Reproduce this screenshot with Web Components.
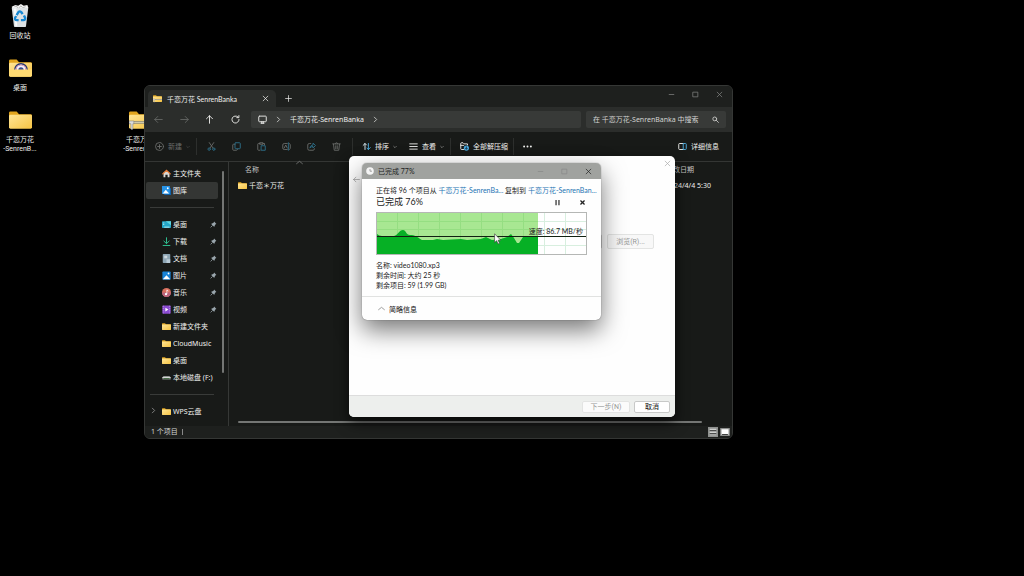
<!DOCTYPE html>
<html lang="zh-CN">
<head>
<meta charset="utf-8">
<title>桌面</title>
<style>
html,body{margin:0;height:100%;background:#000;overflow:hidden}
body{font:7px/10px "Noto Sans","Noto Sans CJK SC",sans-serif;color:#f0f0ee}
</style>
</head>
<body>
<desk-top></desk-top>
<script>
const folder = '<path d="M0 2.5Q0 1 1.500 1H8L10.500 4H22.500Q24 4 24 5.500V18H0Z" fill="#e2a51d"/><path d="M0 5.500Q0 4.500 1.500 4.500H22.500Q24 4.500 24 6V17.500Q24 19 22.500 19H1.500Q0 19 0 17.500Z" fill="url(#f)"/><defs><linearGradient id="f" x2="1" y2="1"><stop stop-color="#ffe596"/><stop offset="1" stop-color="#f6c444"/></linearGradient></defs>';
const line = (d, extra = '') => `<path d="${d}" fill="none" stroke="currentColor" stroke-width="1.2" stroke-linecap="round" stroke-linejoin="round" ${extra}/>`;
const tone = (d, c) => `<path d="${d}" fill="none" stroke="${c}" stroke-width="1.3" stroke-linecap="round" stroke-linejoin="round"/>`;
const ICONS = {
  folder: ['0 0 24 20', folder],
  zip: ['0 0 24 20', folder + '<path d="M0 11H24V14H0Z" fill="#9c9578"/><path d="M0 12.500H24" stroke="#d6d0b5"/><path d="M0 11h5v3h-1v5q0 1-1 1t-1-1v-5h-2z" fill="#dcdcdc" stroke="#777" stroke-width=".5"/>'],
  rainbow: ['0 0 24 20', folder + '<g fill="none" stroke-width="1.500"><path d="M6 12a6.500 6.500 0 0 1 13 0" stroke="#28366d" fill="#fff"/><path d="M7.500 12a5 5 0 0 1 10 0" stroke="#d89bb2"/><path d="M9 12a3.500 3.500 0 0 1 7 0" stroke="#f3f3ff" fill="#394c8c"/></g><path d="M0 11.500H24V17.500Q24 19 22.500 19H1.500Q0 19 0 17.500Z" fill="#ffda72"/>'],
  bin: ['0 0 20 26', '<path d="M1 3L5 1 8 2 11 0 14 2 18 1 19 4 17 7H3Z" fill="#f5f5f5"/><path d="M4 3l2-1 2 3 3-3 2 2 3-1" stroke="#aaa" fill="none"/><path d="M1 4H19L16.500 24Q16.300 25 15 25H5Q3.700 25 3.500 24Z" fill="#dce1e4"/><path d="M3 5h3l1 19H5Z" fill="#f7f9fa"/><g fill="none" stroke="#1687d2" stroke-width="2.600"><path d="M6.300 12L8.300 8.800Q10 7 11.500 9L12.800 11"/><path d="M14.300 12.500L15.500 14.800Q16 17.300 13.500 17.500H11"/><path d="M8.500 17.500H6.500Q4 17 4.800 14.800L5.800 13"/></g>'],
  back: ['0 0 12 12', line('M11 6H1M5 2L1 6L5 10')],
  forward: ['0 0 12 12', line('M1 6H11M7 2L11 6L7 10')],
  up: ['0 0 12 12', line('M6 11V1M2 5L6 1L10 5')],
  reload: ['0 0 12 12', line('M10.700 6A4.700 4.700 0 1 1 9 2.400M10.500 .8V3.500H7.700')],
  pc: ['0 0 12 12', line('M2 1.500H10Q11 1.500 11 2.500V8Q11 9 10 9H2Q1 9 1 8V2.500Q1 1.500 2 1.500M4 11H8M5 9V11M7 9V11')],
  right: ['0 0 12 12', line('M4 2L8 6L4 10')],
  down: ['0 0 12 12', line('M2 4L6 8L10 4')],
  caret: ['0 0 12 12', line('M1 8L6 4L11 8')],
  close: ['0 0 12 12', line('M2 2L10 10M10 2L2 10')],
  stop: ['0 0 12 12', '<path d="M2.500 2.500L9.500 9.500M9.500 2.500L2.500 9.500" stroke="currentColor" stroke-width="2.200"/>'],
  pause: ['0 0 12 12', '<path d="M3.500 1.500V10.500M8.500 1.500V10.500" stroke="currentColor" stroke-width="2"/>'],
  plus: ['0 0 12 12', line('M6 1V11M1 6H11')],
  min: ['0 0 12 12', line('M2 6H10')],
  max: ['0 0 12 12', line('M2 2H10V10H2Z')],
  search: ['0 0 12 12', line('M8 5A3.300 3.300 0 1 1 1.400 5A3.300 3.300 0 0 1 8 5M7.500 7.500L11 11')],
  add: ['0 0 12 12', line('M11.300 6A5.300 5.300 0 1 1 .7 6A5.300 5.300 0 0 1 11.300 6M6 3.500V8.500M3.500 6H8.500')],
  cut: ['0 0 12 12', line('M3 .8L8 8M9 .8L4 8') + tone('M4.500 9.500A1.600 1.600 0 1 1 1.300 9.500A1.600 1.600 0 0 1 4.500 9.500M10.700 9.500A1.600 1.600 0 1 1 7.500 9.500A1.600 1.600 0 0 1 10.700 9.500', '#2c6b84')],
  copy: ['0 0 12 12', line('M4 3H2Q1 3 1 4V10Q1 11 2 11H6Q7 11 7.500 9.500') + tone('M5 1H10Q11 1 11 2V8Q11 9 10 9H5Q4 9 4 8V2Q4 1 5 1', '#2c6b84')],
  paste: ['0 0 12 12', line('M4 2H2Q1 2 1 3V10Q1 11 2 11H4M8 2H10V4M4 1H8V3H4Z') + tone('M6 5H11V11H6Z', '#2c6b84')],
  rename: ['0 0 12 12', line('M7 2H3Q1 2 1 4V8Q1 10 3 10H7M10 2Q11 3 11 4V8Q11 9 10 10M3 8L5 4L7 8') + tone('M8.500 1V11', '#2c6b84')],
  share: ['0 0 12 12', line('M5 2H3Q1 2 1 4V9Q1 11 3 11H8Q10 11 10 9') + tone('M4 7.500Q5 4 8 4V1.500L11.300 4.700L8 8V6Q5.500 6 4 7.500', '#2c6b84')],
  trash: ['0 0 12 12', line('M1 2.500H11M4.500 2.500Q4.500 1 6 1T7.500 2.500M2 3L3 11H9L10 3M5 5V9M7 5V9')],
  sort: ['0 0 12 12', tone('M4 10V2M1.500 4.500L4 2L6 4', '#d5e5ec') + tone('M8.500 2V10M6.500 8L8.500 10L11 7.500', '#4aa8d8')],
  view: ['0 0 12 12', line('M1 2.500H11M1 6H11M1 9.500H11')],
  extract: ['0 0 12 12', line('M5 10H2Q1 10 1 9V2Q1 1 2 1H4L5.500 2.500H10V4M1 4.500H5') + '<circle cx="8.500" cy="8" r="3.500" fill="#49a9dc"/><path d="M8.500 6V9.500M7 8.300L8.500 9.800L10 8.300" stroke="#123" fill="none"/>'],
  dots: ['0 0 12 12', '<g fill="currentColor"><circle cx="1.500" cy="6" r="1.300"/><circle cx="6" cy="6" r="1.300"/><circle cx="10.500" cy="6" r="1.300"/></g>'],
  panel: ['0 0 12 12', line('M7 2H2Q1 2 1 3V9Q1 10 2 10H7') + tone('M7.500 2H10Q11 2 11 3V9Q11 10 10 10H7.500Z', '#4aa8d8')],
  home: ['0 0 12 12', '<path d="M2 5L6 2L10 5V11H7.500V7.500H4.500V11H2Z" fill="#d9d9d6"/><path d="M1 6.500L6 1.700L11 6.500" fill="none" stroke="#e57d3b" stroke-width="1.700" stroke-linecap="round"/>'],
  gallery: ['0 0 12 12', '<path d="M3 3H12V12H3Z" fill="#0d62ac"/><path d="M0 0H10.500V10.500H0Z" fill="#2793e6"/><path d="M1 10L5 5L9.500 10Z" fill="#fff"/><circle cx="7.700" cy="3" r="1.200" fill="#fff"/>'],
  desktop: ['0 0 12 12', '<rect y="1.500" width="12" height="9" rx="1" fill="#24a7c8"/><path d="M5 1.500H12V7Z" fill="#5fd5e0"/><path d="M1.500 4H3M1.500 6H3M3 9.500H10" stroke="#d8ffff"/>'],
  download: ['0 0 12 12', tone('M6 1V8.500M2.500 5.500L6 8.800L9.500 5.500M1.500 11.300H10.500', '#2fc191')],
  doc: ['0 0 12 12', '<rect x="1" width="10" height="12" rx="1" fill="#8ea6b5"/><path d="M3 3H7M3 5H7" stroke="#fff"/><path d="M6 7H11V12H6Z" fill="#b8cad5"/>'],
  picture: ['0 0 12 12', '<rect x=".5" y=".5" width="11" height="11" rx="1" fill="#1783d7"/><path d="M1 11L6 5.500L11 11Z" fill="#fff"/><circle cx="8.700" cy="3.300" r="1.200" fill="#fff"/>'],
  music: ['0 0 12 12', '<circle cx="6" cy="6" r="6" fill="#d8705e"/><path d="M0 6A6 6 0 0 0 12 6Z" fill="#b9637c"/><path d="M6.500 8V2.500L8.500 4" stroke="#fff" fill="none"/><circle cx="5.300" cy="8.300" r="1.500" fill="#fff"/>'],
  video: ['0 0 12 12', '<rect x=".5" y=".5" width="11" height="11" rx="1" fill="#8a4bd0"/><path d="M4.500 3.500L8.500 6L4.500 8.500Z" fill="#fff"/><path d="M1.700 1V11M10.300 1V11" stroke="#c9a0f5" stroke-dasharray="1.500 1.500"/>'],
  disk: ['0 0 12 12', '<path d="M2 4H10L11.500 6V8.500H.5V6Z" fill="#8d918f"/><path d="M.5 6H11.500" stroke="#eee"/><path d="M2 7.500H10" stroke="#252"/>'],
  pin: ['0 0 12 12', '<path d="M7 1L11 5L9.500 5.500L8 8Q8 9.500 7 10L2 5Q3 4 4.500 4L6.500 2.500Z" fill="#9aa6ad"/><path d="M4.500 7.500L1 11" stroke="#9aa6ad" stroke-width="1.300"/>'],
  clock: ['0 0 12 12', '<circle cx="6" cy="6" r="5.700" fill="#f4f4f4"/><path d="M6 3V6.300H9" fill="none" stroke="#888" stroke-width="1.100"/>'],
  list: ['0 0 12 12', '<path d="M0 0H12V12H0Z" fill="#8f918f"/><path d="M2 2H10V10H2Z" fill="#cfd1cf"/><path d="M2 4.500H10M2 8H10" stroke="#222" stroke-width="1.300"/>'],
  tiles: ['0 0 12 12', '<path d="M1 2H11V10H1Z" fill="#fff" stroke="#8c8e8c" stroke-width="1.500"/><path d="M2.500 9H9.500" stroke="#222"/>'],
  cursor: ['0 0 12 20', '<path d="M1 1V16L4.500 12.800L7 18.500L9.500 17.300L7 12H11.500Z" fill="#fff" stroke="#333"/>']
};
const BASE = `*{box-sizing:border-box}:host{box-sizing:border-box;display:block}
button,input{font:inherit;color:inherit;background:none;border:0;padding:0;margin:0;outline:0}
button{display:flex;align-items:center;justify-content:center;gap:4px;white-space:nowrap}
a{color:inherit;text-decoration:none}`;
function define(name, css, html) {
  customElements.define(name, class extends HTMLElement {
    constructor() {
      super();
      const t = document.createElement('template');
      t.innerHTML = `<style>${BASE}${css}</style>${typeof html === 'function' ? html(this) : html}`;
      this.attachShadow({ mode: 'open' }).append(t.content.cloneNode(true));
    }
  });
}
const icon = (n, s = 9, w = s) => `<ui-icon name="${n}" style="width:${w}px;height:${s}px"></ui-icon>`;

define('ui-icon', ':host{flex:none}svg{display:block;width:100%;height:100%}', el => {
  const [box, body] = ICONS[el.getAttribute('name')];
  return `<svg viewBox="${box}" aria-hidden="true">${body}</svg>`;
});

define('desk-icon', `:host{height:52px;padding-top:4px;text-align:center;font-family:Roboto,"Noto Sans CJK SC",sans-serif}
a{display:flex;flex-direction:column;align-items:center;gap:2px}
.pic{height:24px;display:grid;place-items:center}
span{line-height:9px;white-space:nowrap;padding-top:2px}`,
  el => `<a href="#"><div class="pic">${el.getAttribute('icon') === 'bin' ? icon('bin', 24, 20) : icon(el.getAttribute('icon'), 20, 23)}</div><span><slot></slot></span></a>`);

define('side-item', `:host{height:17px}
a{height:17px;display:flex;align-items:center;gap:2px;padding:0 1px 0 4px;border-radius:2px;white-space:nowrap}
:host([active]) a{background:#343634}
.open{width:9px;height:9px;color:#aaa;margin-right:1px}.label{flex:1}`,
  el => `<a href="#"><span class="open">${el.hasAttribute('expand') ? icon('right', 7) : ''}</span>${icon(el.getAttribute('icon'), 9)}<span class="label"><slot></slot></span>${el.hasAttribute('pinned') ? icon('pin', 7) : ''}</a>`);

define('side-bar', `:host{display:flex;border-right:1px solid #363836;overflow:hidden;padding:3px 4px 0 1px;contain:size}
nav{flex:1;min-width:0}hr{border:0;height:1px;background:#393b39;margin:8px 4px}
.thumb{width:2px;height:202px;background:#747674;border-radius:1px;margin:6px 0 0 4px}`,
  `<nav><side-item icon="home">主文件夹</side-item><side-item icon="gallery" active>图库</side-item><hr>
<side-item icon="desktop" pinned>桌面</side-item><side-item icon="download" pinned>下载</side-item><side-item icon="doc" pinned>文档</side-item><side-item icon="picture" pinned>图片</side-item><side-item icon="music" pinned>音乐</side-item><side-item icon="video" pinned>视频</side-item><side-item icon="folder">新建文件夹</side-item><side-item icon="folder">CloudMusic</side-item><side-item icon="folder">桌面</side-item><side-item icon="disk">本地磁盘 (F:)</side-item><hr><side-item icon="folder" expand>WPS云盘</side-item></nav><div class="thumb"></div>`);

define('tab-bar', `:host{display:flex;height:21px;background:#1e201e;padding-left:3px}
.tab{display:flex;align-items:center;width:128px;height:17px;align-self:end;background:#2b2d2b;border-radius:5px 5px 0 0;padding:0 7px 0 5px;gap:5px}
.tab span{flex:1;white-space:nowrap;font-family:Lato,"Noto Sans CJK SC",sans-serif}.new{margin:4px 0 0 9px}
.win{display:flex;gap:17px;margin:0 9px 4px auto;color:#858785}`,
  `<div class="tab">${icon('zip', 9)}<span>千恋万花 SenrenBanka</span><button aria-label="关闭标签页">${icon('close', 7)}</button></div><button class="new" aria-label="新标签页">${icon('plus', 7)}</button>
<div class="win"><button aria-label="最小化">${icon('min', 7)}</button><button aria-label="最大化">${icon('max', 7)}</button><button aria-label="关闭">${icon('close', 7)}</button></div>`);

define('address-bar', `:host{display:flex;align-items:center;height:25px;background:#2b2d2b;padding:0 6px 0 9px}
.nav{display:flex;justify-content:space-between;width:86px;margin-right:11px;flex:none}.nav .off{color:#646664}
.path{flex:1;display:flex;align-items:center;height:17px;background:#383a38;border-radius:2px;padding-left:7px;gap:8px;white-space:nowrap}
.find{display:flex;align-items:center;width:140px;height:17px;margin-left:5px;background:#383a38;border-radius:2px;padding:0 7px}
input{flex:1;min-width:0}input::placeholder{color:#d2d3d1;opacity:1}`,
  `<div class="nav"><button class="off" aria-label="后退">${icon('back', 9)}</button><button class="off" aria-label="前进">${icon('forward', 9)}</button><button aria-label="向上">${icon('up', 9)}</button><button aria-label="刷新">${icon('reload', 9)}</button></div>
<div class="path">${icon('pc', 9)}${icon('right', 7)}<a href="#">千恋万花-SenrenBanka</a>${icon('right', 7)}</div>
<label class="find"><input type="text" aria-label="搜索" placeholder="在 千恋万花-SenrenBanka 中搜索">${icon('search', 7)}</label>`);

define('tool-bar', `:host{display:flex;align-items:center;height:30px;background:#181a18;border-bottom:1px solid #343634;padding:0 13px 0 10px}
.off{color:#6a6c6a}.gap{width:1px;height:17px;background:#2d2f2d}
.add{margin-right:6px}.set{display:flex;gap:16px;margin:0 11px 0 10px}.sort{margin:0 12px 0 9px}.view{margin-right:6px}
.all{margin:0 5px 0 9px}.more{margin-left:9px}.info{margin-left:auto}`,
  `<button class="off add">${icon('add', 9)}新建${icon('down', 4)}</button><div class="gap"></div>
<div class="set off">${['cut|剪切', 'copy|复制', 'paste|粘贴', 'rename|重命名', 'share|共享', 'trash|删除'].map(s => { const [n, l] = s.split('|'); return `<button aria-label="${l}">${icon(n, 9)}</button>`; }).join('')}</div><div class="gap"></div>
<button class="sort">${icon('sort', 9)}排序${icon('down', 4)}</button><button class="view">${icon('view', 9)}查看${icon('down', 4)}</button><div class="gap"></div>
<button class="all">${icon('extract', 9)}全部解压缩</button><div class="gap"></div><button class="more" aria-label="更多">${icon('dots', 9)}</button><button class="info">${icon('panel', 9)}详细信息</button>`);

define('file-list', `:host{display:flex;flex-direction:column;background:#181a18;position:relative;min-width:0}
table{width:100%;border-collapse:collapse;table-layout:fixed}th,td{padding:0;height:17px;text-align:left;font-weight:400;white-space:nowrap}
th{height:15px;color:#c4c5c3}th:first-child{padding-left:16px}td:first-child{padding-left:9px}col.d{width:66px}
.n{display:flex;align-items:center;gap:2px}.sort{position:absolute;left:67px;top:-3px;color:#8b8d8b}
.thumb{height:2px;background:#747674;border-radius:1px;margin:auto 30px 3px 9px}`,
  `<span class="sort">${icon('caret', 7)}</span><table><colgroup><col><col class="d"></colgroup><thead><tr><th>名称</th><th>修改日期</th></tr></thead><tbody><tr><td><a class="n" href="#">${icon('folder', 9)}千恋＊万花</a></td><td>2024/4/4 5:30</td></tr></tbody></table><div class="thumb"></div>`);

define('explorer-window', `:host{display:flex;flex-direction:column;border:1px solid #353735;border-radius:6px;overflow:hidden;background:#181a18}
.main{flex:1;display:grid;grid-template-columns:84px 1fr;min-height:0}
footer{display:flex;align-items:center;height:12px;background:#1e201e;padding:0 2px 0 6px;color:#d5d6d4}
.bar{width:1px;height:6px;background:#888;margin-left:4px}.modes{display:flex;gap:2px;margin-left:auto}`,
  `<tab-bar></tab-bar><address-bar></address-bar><tool-bar></tool-bar><div class="main"><side-bar></side-bar><file-list></file-list></div>
<footer>1 个项目<span class="bar"></span><div class="modes"><button aria-label="详细信息视图">${icon('list', 10)}</button><button aria-label="大图标视图">${icon('tiles', 10)}</button></div></footer>`);

define('extract-wizard', `:host{display:flex;flex-direction:column;background:#fefefe;color:#222;border-radius:5px;overflow:hidden;box-shadow:0 6px 14px #000a;font-family:Roboto,"Noto Sans CJK SC",sans-serif}
header{display:flex;justify-content:space-between;align-items:center;padding:4px 4px 0 4px;color:#aaa}
.back{align-self:flex-start;margin:9px 0 0 4px;color:#999}
.form{flex:1;display:flex;align-items:flex-start;padding:51px 21px 0 27px;gap:5px}
input{flex:1;min-width:0;height:15px;border:1px solid #ccc;border-radius:2px}
button.b{height:12px;border:1px solid #e3e4e3;border-radius:2px;background:#fbfbfb;color:#969796}
.form button.b{width:47px;height:15px;background:#f8f8f8}
footer{display:flex;justify-content:flex-end;align-items:center;gap:4px;height:22px;background:#edefed;border-top:1px solid #ddd;padding-right:5px}
footer .next{width:48px}footer button.ok{width:36px;border-color:#c8c9c8;background:#fff;color:#111}`,
  `<header><span></span><button aria-label="关闭">${icon('close', 7)}</button></header><button class="back" aria-label="返回">${icon('back', 7)}</button>
<div class="form"><input type="text" aria-label="目标文件夹"><button class="b">浏览(R)...</button></div><footer><button class="b next">下一步(N)</button><button class="b ok">取消</button></footer>`);

define('speed-graph', `:host{height:43px;border:1px solid #b5b7b5;position:relative;background:#fff}svg{display:block;width:100%;height:100%}
span{position:absolute;right:3px;top:13px;white-space:nowrap}`,
  `<svg viewBox="0 0 209 41" preserveAspectRatio="none" role="img" aria-label="传输速度"><path d="M0 0H161V41H0Z" fill="#a8e792"/>
<path d="M20.500 0V41M41.500 0V41M62.500 0V41M83.500 0V41M104.500 0V41M125.500 0V41M146.500 0V41M0 8.500H161M0 16.500H161" stroke="#95de82" fill="none"/>
<path d="M167.500 0V41M188.500 0V41M161 8.500H209M161 16.500H209M161 32.500H209" stroke="#d8efdf" fill="none"/>
<path d="M0 41V21Q2 23 5 23H17C21 22 22 17 26 17C29 17 29 22 33 22C38 22 40 24 45 27H56L60 26L66 27L84 26L90 27L104 26L109 24L115 27L124 26L130 24L134 21L137 25L140 30L142 30L146 24L150 23H161V41Z" fill="#06b025"/><path d="M0 23.500H209" stroke="#112011"/></svg><span>速度: 86.7 MB/秒</span>`);

define('copy-dialog', `:host{background:#fefefe;color:#222;border-radius:5px;overflow:hidden;box-shadow:0 10px 24px #0008,0 0 1px #555;font-family:Lato,"Noto Sans CJK SC",sans-serif}
header{display:flex;align-items:center;height:16px;background:#a0a29f;padding:0 9px 0 4px;gap:4px}
.win{display:flex;gap:17px;margin-left:auto}.win .off{color:#868886}
main{padding:6px 12px 6px 14px}p{margin:0;white-space:nowrap}a{color:#2473b3}
.row{display:flex;align-items:center;height:14px;padding-right:3px}h1{font-size:9px;line-height:14px;font-weight:400;margin:0 auto 0 0}
.row button+button{margin-left:18px}speed-graph{margin:3px 2px 5px 0}
footer{border-top:1px solid #e1e2e1;height:24px;display:flex;align-items:center;padding-left:16px;color:#111}footer ui-icon{color:#777}`,
  `<header>${icon('clock', 8)}<span>已完成 77%</span><div class="win"><button class="off" aria-label="最小化">${icon('min', 7)}</button><button class="off" aria-label="最大化">${icon('max', 7)}</button><button aria-label="关闭">${icon('close', 7)}</button></div></header>
<main><p>正在将 96 个项目从 <a href="#">千恋万花-SenrenBa...</a> 复制到 <a href="#">千恋万花-SenrenBan...</a></p>
<div class="row"><h1>已完成 76%</h1><button aria-label="暂停">${icon('pause', 7)}</button><button aria-label="取消">${icon('stop', 7)}</button></div>
<speed-graph></speed-graph><p>名称: video1080.xp3</p><p>剩余时间: 大约 25 秒</p><p>剩余项目: 59 (1.99 GB)</p></main><footer><button>${icon('caret', 7)}简略信息</button></footer>`);

define('desk-top', `:host{position:relative;min-height:100vh;background:#000;overflow:hidden}
.icons{display:grid;grid-template-columns:repeat(auto-fill,40px);grid-auto-rows:52px}
.icons .a{grid-column:1}.icons .z{grid-area:3/4}.icons .f{grid-row:3}
explorer-window{position:absolute;left:144px;top:85px;right:291px;bottom:137px}
extract-wizard{position:absolute;left:349px;top:156px;right:349px;bottom:159px}
copy-dialog{position:absolute;left:362px;top:163px;right:423px}
.cursor{position:absolute;left:494px;top:233px}`,
  `<div class="icons"><desk-icon class="a" icon="bin">回收站</desk-icon><desk-icon class="a" icon="rainbow">桌面</desk-icon><desk-icon class="a f" icon="folder">千恋万花<br>-SenrenB...</desk-icon><desk-icon class="z" icon="zip">千恋万花<br>-SenrenB...</desk-icon></div>
<explorer-window></explorer-window><extract-wizard></extract-wizard><copy-dialog></copy-dialog><div class="cursor">${icon('cursor', 12, 7)}</div>`);
</script>
</body>
</html>
